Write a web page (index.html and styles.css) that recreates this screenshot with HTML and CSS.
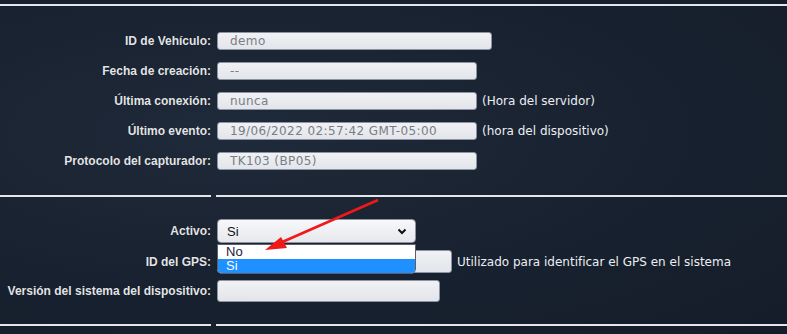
FILE: index.html
```html
<!DOCTYPE html>
<html lang="es">
<head>
  <meta charset="UTF-8">
  <title>Dispositivo</title>
  <link rel="stylesheet" href="styles.css">
</head>
<body>
  <div class="topline"></div>

  <div class="form info">
    <label>ID de Vehículo:</label>
    <div class="field"><input class="wide" type="text" value="demo" disabled></div>

    <label>Fecha de creación:</label>
    <div class="field"><input type="text" value="--" disabled></div>

    <label>Última conexión:</label>
    <div class="field"><input type="text" value="nunca" disabled><span class="hint">(Hora del servidor)</span></div>

    <label>Último evento:</label>
    <div class="field"><input type="text" value="19/06/2022 02:57:42 GMT-05:00" disabled><span class="hint">(hora del dispositivo)</span></div>

    <label>Protocolo del capturador:</label>
    <div class="field"><input type="text" value="TK103 (BP05)" disabled></div>
  </div>

  <div class="sep"><span></span><span></span></div>

  <div class="form config">
    <label>Activo:</label>
    <div class="field select-wrap">
      <div class="select">
        <span>Si</span>
        <svg width="10" height="7" viewBox="0 0 10 7"><path d="M1.5 1.5 L5 5 L8.5 1.5" fill="none" stroke="#111" stroke-width="2"/></svg>
      </div>
      <ul class="options">
        <li>No</li>
        <li class="active">Si</li>
      </ul>
    </div>

    <label>ID del GPS:</label>
    <div class="field"><input class="gps" type="text" value=""><span class="hint">Utilizado para identificar el GPS en el sistema</span></div>

    <label>Versión del sistema del dispositivo:</label>
    <div class="field"><input class="version" type="text" value=""></div>
  </div>

  <div class="sep"><span></span><span></span></div>

  <!-- annotation arrow -->
  <svg class="arrow" width="787" height="334" viewBox="0 0 787 334">
    <line x1="378" y1="200" x2="280" y2="243" stroke="#f01818" stroke-width="2.5"/>
    <polygon points="265,250 281,237 287,248" fill="#f01818"/>
  </svg>
</body>
</html>
```
FILE: styles.css
```css
body {
  margin: 0;
  height: 334px;
  overflow: hidden;
  background: radial-gradient(ellipse at 30% 40%, #1f2a3a 0%, #18212f 55%, #151d2a 100%);
  font-family: "Liberation Sans", Arial, sans-serif;
  position: relative;
}
.topline {
  margin-top: 4px;
  border-top: 2px solid #e4e6ec;
}
/* Form grid */
.form {
  display: grid;
  grid-template-columns: 211px 1fr;
  column-gap: 6px;
  align-items: center;
}
.form label {
  text-align: right;
  color: #e2e4e8;
  font-size: 12px;
  font-weight: bold;
  text-shadow: 0 0 1px rgba(0,0,0,0.6);
}
.field {
  display: flex;
  align-items: center;
  gap: 5px;
}
.info {
  padding-top: 26px;
  row-gap: 12px;
}
.info input {
  width: 260px;
  height: 18px;
}
.info input.wide {
  width: 275px;
}
input {
  box-sizing: border-box;
  margin: 0;
  border: 1px solid #8d93a3;
  border-radius: 3px;
  background: linear-gradient(to bottom, #f0f1f4, #e2e5ea);
  padding: 0 12px;
  font-family: "DejaVu Sans", Verdana, sans-serif;
  font-size: 12px;
  letter-spacing: 0.4px;
  color: #7a7d84;
}
.hint {
  font-family: "DejaVu Sans", Verdana, sans-serif;
  font-size: 12px;
  color: #eceef2;
  white-space: nowrap;
}
/* Separator with column gap */
.sep {
  display: grid;
  grid-template-columns: 211px 1fr;
  column-gap: 5px;
  margin-top: 25px;
}
.sep span {
  border-top: 2px solid #e4e6ec;
}
.config {
  padding-top: 22px;
  row-gap: 7px;
}
.config + .sep {
  margin-top: 22px;
}
.select-wrap {
  position: relative;
}
.select {
  box-sizing: border-box;
  width: 199px;
  height: 24px;
  border: 1px solid #8d93a3;
  border-radius: 4px;
  background: linear-gradient(to bottom, #f7f8fa, #e6e8ec);
  display: flex;
  align-items: center;
  justify-content: space-between;
  padding: 0 8px 0 9px;
  font-size: 13px;
  color: #111;
}
.options {
  position: absolute;
  top: 25px;
  left: 0;
  width: 199px;
  box-sizing: border-box;
  margin: 0;
  padding: 0;
  list-style: none;
  background: #fff;
  border: 1px solid #5a5f6b;
  border-radius: 0 0 5px 5px;
  overflow: hidden;
  z-index: 5;
  font-size: 13px;
}
.options li {
  height: 14px;
  line-height: 14px;
  padding-left: 8px;
  color: #1a1a3a;
}
.options li.active {
  background: #1e90ff;
  color: #fff;
}
.gps {
  width: 235px;
  height: 23px;
}
.version {
  width: 223px;
  height: 22px;
}
.arrow {
  position: absolute;
  top: 0;
  left: 0;
  z-index: 10;
  pointer-events: none;
}
```
